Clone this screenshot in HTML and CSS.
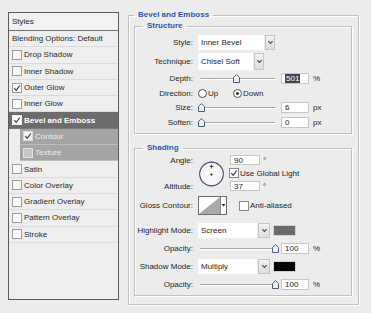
FILE: index.html
```html
<!DOCTYPE html>
<html>
<head>
<meta charset="utf-8">
<link rel="stylesheet" href="styles.css">
</head>
<body>
<div class="dialog">
  <div class="styles-panel">
    <div class="panel-head">Styles</div>
    <div class="row">Blending Options: Default</div>
    <div class="row"><span class="cb"></span>Drop Shadow</div>
    <div class="row"><span class="cb"></span>Inner Shadow</div>
    <div class="row"><span class="cb"><svg viewBox="0 0 8 8"><path d="M1.3 4.2 L3.2 6.3 L6.8 1.5"/></svg></span>Outer Glow</div>
    <div class="row"><span class="cb"></span>Inner Glow</div>
    <div class="row row-active"><span class="cb"><svg viewBox="0 0 8 8"><path d="M1.3 4.2 L3.2 6.3 L6.8 1.5"/></svg></span>Bevel and Emboss</div>
    <div class="row row-sub"><span class="cb"><svg viewBox="0 0 8 8"><path d="M1.3 4.2 L3.2 6.3 L6.8 1.5"/></svg></span>Contour</div>
    <div class="row row-sub"><span class="cb cb-dim"></span>Texture</div>
    <div class="row"><span class="cb"></span>Satin</div>
    <div class="row"><span class="cb"></span>Color Overlay</div>
    <div class="row"><span class="cb"></span>Gradient Overlay</div>
    <div class="row"><span class="cb"></span>Pattern Overlay</div>
    <div class="row"><span class="cb"></span>Stroke</div>
  </div>

  <fieldset class="group outer">
    <legend>Bevel and Emboss</legend>

    <fieldset class="group inner structure">
      <legend>Structure</legend>
      <div class="field f-style">
        <span class="lbl">Style:</span>
        <span class="select"><span class="select-box w-style">Inner Bevel</span><span class="drop-btn"><svg viewBox="0 0 8 6"><path d="M1.5 1.5 L4 4 L6.5 1.5"/></svg></span></span>
      </div>
      <div class="field f-tech">
        <span class="lbl">Technique:</span>
        <span class="select"><span class="select-box w-tech">Chisel Soft</span><span class="drop-btn"><svg viewBox="0 0 8 6"><path d="M1.5 1.5 L4 4 L6.5 1.5"/></svg></span></span>
      </div>
      <div class="field f-num f-depth">
        <span class="lbl">Depth:</span>
        <span class="slider"><span class="thumb" style="left:35px"><svg viewBox="0 0 7 9"><path d="M0.5 8.5 V3.6 L3.5 0.6 L6.5 3.6 V8.5 Z"/></svg></span></span>
        <span class="num"><span class="sel">501</span></span>
        <span class="unit">%</span>
      </div>
      <div class="field f-num f-dir">
        <span class="lbl">Direction:</span>
        <span class="radio"></span><span class="radio-txt">Up</span>
        <span class="radio on"></span><span class="radio-txt">Down</span>
      </div>
      <div class="field f-num f-size">
        <span class="lbl">Size:</span>
        <span class="slider"><span class="thumb" style="left:0px"><svg viewBox="0 0 7 9"><path d="M0.5 8.5 V3.6 L3.5 0.6 L6.5 3.6 V8.5 Z"/></svg></span></span>
        <span class="num">6</span>
        <span class="unit">px</span>
      </div>
      <div class="field f-num f-soften">
        <span class="lbl">Soften:</span>
        <span class="slider"><span class="thumb" style="left:0px"><svg viewBox="0 0 7 9"><path d="M0.5 8.5 V3.6 L3.5 0.6 L6.5 3.6 V8.5 Z"/></svg></span></span>
        <span class="num">0</span>
        <span class="unit">px</span>
      </div>
    </fieldset>

    <fieldset class="group inner shading">
      <legend>Shading</legend>
      <div class="angle-block">
        <span class="lbl a-lbl1">Angle:</span>
        <span class="dial"><svg viewBox="0 0 28 26"><circle cx="14" cy="13" r="12.2" class="ring"/><circle cx="14" cy="13" r="11" class="ring-in"/><path d="M14 3.2 V7.2 M12 5.2 H16" class="cross"/><circle cx="14" cy="13.5" r="1.1" class="dot"/></svg></span>
        <span class="a-val a-r1"><span class="num num-s">90</span><span class="unit">°</span></span>
        <span class="a-val a-r2"><span class="cb cb-light"><svg viewBox="0 0 8 8"><path d="M1.3 4.2 L3.2 6.3 L6.8 1.5"/></svg></span><span class="cb-txt">Use Global Light</span></span>
        <span class="lbl a-lbl3">Altitude:</span>
        <span class="a-val a-r3"><span class="num num-s">37</span><span class="unit">°</span></span>
      </div>
      <div class="field f-gloss">
        <span class="lbl">Gloss Contour:</span>
        <span class="contour"><svg viewBox="0 0 29 19"><rect x="0.5" y="0.5" width="28" height="18" class="c-frame"/><path d="M1 18 L22 1 V18 Z" class="c-fill"/><path d="M22.5 1 V18" class="c-div"/><path d="M23.5 8 H27.5 L25.5 10.5 Z" class="c-arrow"/></svg></span>
        <span class="cb cb-light cb-aa"></span><span class="cb-txt">Anti-aliased</span>
      </div>
      <div class="field f-mode f-hl">
        <span class="lbl">Highlight Mode:</span>
        <span class="select"><span class="select-box w-mode">Screen</span><span class="drop-btn btn-wide"><svg viewBox="0 0 8 6"><path d="M1.5 1.5 L4 4 L6.5 1.5"/></svg></span></span>
        <span class="swatch sw-gray"></span>
      </div>
      <div class="field f-num f-op1">
        <span class="lbl">Opacity:</span>
        <span class="slider"><span class="thumb" style="left:74px"><svg viewBox="0 0 7 9"><path d="M0.5 8.5 V3.6 L3.5 0.6 L6.5 3.6 V8.5 Z"/></svg></span></span>
        <span class="num">100</span>
        <span class="unit">%</span>
      </div>
      <div class="field f-mode f-sh">
        <span class="lbl">Shadow Mode:</span>
        <span class="select"><span class="select-box w-mode">Multiply</span><span class="drop-btn btn-wide"><svg viewBox="0 0 8 6"><path d="M1.5 1.5 L4 4 L6.5 1.5"/></svg></span></span>
        <span class="swatch sw-black"></span>
      </div>
      <div class="field f-num f-op2">
        <span class="lbl">Opacity:</span>
        <span class="slider"><span class="thumb" style="left:74px"><svg viewBox="0 0 7 9"><path d="M0.5 8.5 V3.6 L3.5 0.6 L6.5 3.6 V8.5 Z"/></svg></span></span>
        <span class="num">100</span>
        <span class="unit">%</span>
      </div>
    </fieldset>
  </fieldset>
</div>
</body>
</html>
```

FILE: styles.css
```css
html, body {
  margin: 0;
  padding: 0;
}
body {
  background: #ececec;
  font-family: "Liberation Sans", Arial, sans-serif;
  font-size: 8px;
  line-height: 9px;
  color: #1e1e1e;
}
.dialog {
  display: flex;
  align-items: flex-start;
  width: 371px;
  height: 313px;
  box-sizing: border-box;
  padding-left: 8px;
  overflow: hidden;
}

/* ---------- left styles list ---------- */
.styles-panel {
  margin-top: 12px;
  width: 111px;
  height: 288px;
  box-sizing: border-box;
  border: 1px solid #5c5c5c;
  background: #eeeeee;
  display: flex;
  flex-direction: column;
  flex: none;
}
.panel-head {
  height: 18px;
  box-sizing: border-box;
  border-bottom: 1px solid #707070;
  background: #f2f2f2;
  display: flex;
  align-items: center;
  padding-left: 3px;
}
.row {
  height: 16.3px;
  box-sizing: border-box;
  border-bottom: 1px solid #dcdcdc;
  display: flex;
  align-items: center;
  padding-left: 3px;
  gap: 2px;
  flex: none;
  color: #2a2a2a;
}
.row-active {
  background: #6c6c6c;
  color: #ffffff;
  font-weight: bold;
  border-bottom-color: #7a7a7a;
}
.row-sub {
  margin-left: 11px;
  background: #a5a5a5;
  color: #f0f0f0;
  border-bottom-color: #bdbdbd;
}
.cb {
  width: 10px;
  height: 10px;
  box-sizing: border-box;
  border: 1px solid #9c9c9c;
  background: #fafafa;
  display: inline-flex;
  align-items: center;
  justify-content: center;
  flex: none;
}
.cb svg {
  width: 8px;
  height: 8px;
  fill: none;
  stroke: #3a3a3a;
  stroke-width: 1.2;
}
.row-active .cb {
  border-color: #f4f4f4;
  background: #ffffff;
}
.row-sub .cb {
  border-color: #dadada;
  background: #f4f4f4;
}
.row-sub .cb-dim {
  background: #c6c6c6;
  border-color: #e2e2e2;
}

/* ---------- group boxes ---------- */
.group {
  margin: 0;
  min-width: 0;
  border: 1px solid #c0c0c0;
  box-shadow: inset 1px 1px 0 #ffffff, 1px 1px 0 #ffffff;
}
.group > legend {
  padding: 0 4px;
  line-height: 10px;
  font-weight: bold;
  color: #2c56a8;
}
.outer {
  margin-top: 10px;
  margin-left: 9px;
  width: 231px;
  box-sizing: border-box;
  padding: 1px 6px 8px 5px;
  flex: none;
}
.inner {
  padding: 0 0 5px 0;
}
.inner > legend {
  margin-left: 8px;
}
.shading {
  margin-top: 9px;
  padding-bottom: 5px;
}

/* ---------- rows ---------- */
.field {
  display: flex;
  align-items: center;
}
.lbl {
  width: 58px;
  margin-right: 5px;
  text-align: right;
  flex: none;
  white-space: nowrap;
}
.f-style { height: 15px; margin-top: 4px; }
.f-tech { height: 17px; margin-top: 3px; }
.f-depth { height: 11px; margin-top: 3px; }
.f-dir { height: 11px; margin-top: 4px; }
.f-size { height: 11px; margin-top: 3px; }
.f-soften { height: 11px; margin-top: 4px; }

.select {
  display: flex;
  height: 100%;
  gap: 1px;
}
.select-box {
  background: #ffffff;
  display: flex;
  align-items: center;
  padding-left: 3px;
  box-sizing: border-box;
}
.w-style { width: 66px; }
.w-tech { width: 55px; }
.w-mode { width: 59px; }
.drop-btn {
  width: 10px;
  box-sizing: border-box;
  border: 1px solid #c4c4c4;
  background: linear-gradient(#f2f2f2, #dedede);
  display: flex;
  align-items: center;
  justify-content: center;
}
.btn-wide { width: 12px; }
.drop-btn svg {
  width: 7px;
  height: 5px;
  fill: none;
  stroke: #2f4f8f;
  stroke-width: 1.4;
}

.slider {
  position: relative;
  width: 80px;
  height: 11px;
  margin-right: 3px;
  flex: none;
}
.slider::before {
  content: "";
  position: absolute;
  left: 2px;
  right: 3px;
  top: 5px;
  height: 1px;
  background: #a9a9a9;
  border-bottom: 1px solid #ffffff;
}
.thumb {
  position: absolute;
  top: 1px;
  width: 7px;
  height: 9px;
  display: block;
}
.thumb svg {
  display: block;
  width: 7px;
  height: 9px;
  fill: #eef3fa;
  stroke: #4b5d7d;
  stroke-width: 1;
}
.num {
  width: 28px;
  height: 11px;
  box-sizing: border-box;
  border: 1px solid #c6c6c6;
  background: #ffffff;
  padding-left: 3px;
  display: flex;
  align-items: center;
  flex: none;
}
.num .sel {
  background: #3e4652;
  color: #ffffff;
  padding: 0 1px;
  line-height: 9px;
}
.unit {
  margin-left: 4px;
}

.radio {
  width: 9px;
  height: 9px;
  box-sizing: border-box;
  border: 1px solid #505050;
  border-radius: 50%;
  background: #ffffff;
  flex: none;
  display: inline-flex;
  align-items: center;
  justify-content: center;
}
.f-dir .radio:first-of-type { margin-left: 2px; }
.radio.on::after {
  content: "";
  width: 3px;
  height: 3px;
  border-radius: 50%;
  background: #303030;
}
.radio-txt {
  margin-left: 1px;
  width: 25px;
}

/* ---------- shading ---------- */
.angle-block {
  margin-top: 2px;
  display: grid;
  grid-template-columns: 58px 27px auto;
  grid-template-rows: 10px 10px 10px;
  column-gap: 5px;
  row-gap: 3px;
  align-items: center;
}
.a-lbl1 { grid-column: 1; grid-row: 1; margin: 0; }
.a-lbl3 { grid-column: 1; grid-row: 3; margin: 0; }
.dial {
  grid-column: 2;
  grid-row: 1 / 4;
  width: 27px;
  height: 26px;
  align-self: center;
  margin-top: 1px;
}
.dial svg { display: block; width: 27px; height: 26px; }
.dial .ring { fill: #f6f6f6; stroke: #4c5573; stroke-width: 1.4; }
.dial .ring-in { fill: none; stroke: #ffffff; stroke-width: 1; }
.dial .cross { stroke: #333333; stroke-width: 0.9; fill: none; }
.dial .dot { fill: #111111; }
.a-val {
  grid-column: 3;
  display: flex;
  align-items: center;
  height: 10px;
}
.a-r1 { grid-row: 1; }
.a-r2 { grid-row: 2; margin-left: -1px; }
.a-r3 { grid-row: 3; }
.num-s {
  width: 30px;
  height: 10px;
}
.a-val .unit { margin-left: 3px; }
.cb-light {
  border-color: #8a8a8a;
  background: #ffffff;
}
.cb-txt { margin-left: 1px; }

.f-gloss { height: 19px; margin-top: 5px; }
.contour {
  width: 29px;
  height: 19px;
  flex: none;
}
.contour svg { display: block; width: 29px; height: 19px; }
.c-frame { fill: #ffffff; stroke: #6a6a6a; stroke-width: 1; }
.c-fill { fill: #a9a9a9; }
.c-div { stroke: #8a8a8a; stroke-width: 1; }
.c-arrow { fill: #222222; }
.cb-aa { margin-left: 12px; }

.f-hl { height: 15px; margin-top: 8px; }
.f-op1 { height: 11px; margin-top: 5px; }
.f-sh { height: 15px; margin-top: 5px; }
.f-op2 { height: 11px; margin-top: 5px; }
.swatch {
  width: 23px;
  height: 11px;
  margin-left: 3px;
  flex: none;
  box-sizing: border-box;
  border: 1px solid #d0d0d0;
}
.sw-gray { background: #6a6a6a; }
.sw-black { background: #050505; }
```
